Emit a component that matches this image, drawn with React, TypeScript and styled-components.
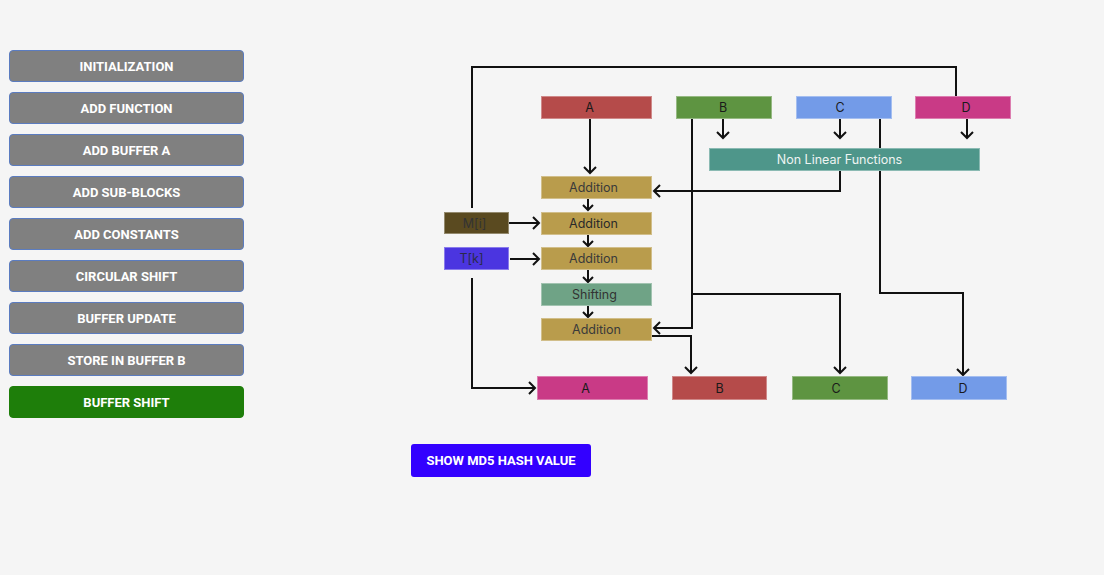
import * as React from 'react'
import styled, { createGlobalStyle } from 'styled-components'

const GlobalStyle = createGlobalStyle`
  html, body {
    margin: 0;
    padding: 0;
    background: #f5f5f5;
  }
`

const Page = styled.div`
  display: flex;
  align-items: flex-start;
  width: 1104px;
  height: 575px;
  background: #f5f5f5;
  font-family: Roboto, 'Liberation Sans', sans-serif;
`

const Sidebar = styled.div`
  display: flex;
  flex-direction: column;
  gap: 10px;
  width: 235px;
  margin: 50px 0 0 9px;
`

const StepButton = styled.button<{ $active?: boolean }>`
  height: 32px;
  border-radius: 4px;
  border: 1px solid ${(p) => (p.$active ? '#1e7e0a' : '#5b7cc0')};
  background: ${(p) => (p.$active ? '#1e7e0a' : '#808080')};
  color: #fff;
  font-family: Roboto, 'Liberation Sans', sans-serif;
  font-weight: 700;
  font-size: 13px;
  text-transform: uppercase;
  cursor: pointer;
`

const Main = styled.div`
  display: flex;
  flex-direction: column;
  align-items: flex-start;
  margin: 50px 0 0 167px;
`

const Canvas = styled.div`
  position: relative;
  width: 620px;
  height: 384px;
`

const Wires = styled.svg`
  position: absolute;
  left: 0;
  top: 0;
  width: 620px;
  height: 384px;
`

const Node = styled.div<{ $bg: string; $fg?: string }>`
  position: absolute;
  display: flex;
  align-items: center;
  justify-content: center;
  box-sizing: border-box;
  background: ${(p) => p.$bg};
  color: ${(p) => p.$fg || '#1a1a1a'};
  border: 1px solid rgba(255, 255, 255, 0.35);
  font-family: Inter, 'Noto Sans', sans-serif;
  font-size: 12.5px;
`

const Label = styled.span<{ $dx?: number }>`
  position: relative;
  left: ${(p) => p.$dx || 0}px;
`

const HashButton = styled.button`
  margin-top: 10px;
  width: 180px;
  height: 33px;
  border: none;
  border-radius: 3px;
  background: #3300ff;
  color: #fff;
  font-family: Roboto, 'Liberation Sans', sans-serif;
  font-weight: 700;
  font-size: 13px;
  text-transform: uppercase;
  cursor: pointer;
`

const steps = [
  'Initialization',
  'Add Function',
  'Add Buffer A',
  'Add Sub-Blocks',
  'Add Constants',
  'Circular Shift',
  'Buffer Update',
  'Store in Buffer B',
  'Buffer Shift',
]

type N = { label: string; x: number; y: number; w: number; h: number; bg: string; fg?: string; dx?: number }

const ox = 411
const oy = 50

const nodes: N[] = [
  { label: 'A', x: 541, y: 96, w: 111, h: 23, bg: '#b54b4a', dx: -7 },
  { label: 'B', x: 676, y: 96, w: 96, h: 23, bg: '#5e9441', dx: -1 },
  { label: 'C', x: 796, y: 96, w: 96, h: 23, bg: '#739be8', dx: -4 },
  { label: 'D', x: 915, y: 96, w: 96, h: 23, bg: '#c93a86', dx: 3 },
  { label: 'Non Linear Functions', x: 709, y: 148, w: 271, h: 23, bg: '#4e968a', fg: '#eef4f2', dx: -5 },
  { label: 'Addition', x: 541, y: 176, w: 111, h: 23, bg: '#b99c4c', fg: '#3a3a3a', dx: -3 },
  { label: 'M[i]', x: 444, y: 212, w: 65, h: 22, bg: '#5a4a20', fg: '#333', dx: -2 },
  { label: 'Addition', x: 541, y: 212, w: 111, h: 23, bg: '#b99c4c', fg: '#2a2a2a', dx: -3 },
  { label: 'T[k]', x: 444, y: 247, w: 65, h: 23, bg: '#4b35e0', fg: '#2a2a4a', dx: -5 },
  { label: 'Addition', x: 541, y: 247, w: 111, h: 23, bg: '#b99c4c', fg: '#3a3a3a', dx: -3 },
  { label: 'Shifting', x: 541, y: 283, w: 111, h: 23, bg: '#6fa386', fg: '#333', dx: -2 },
  { label: 'Addition', x: 541, y: 318, w: 111, h: 23, bg: '#b99c4c', fg: '#3a3a3a' },
  { label: 'A', x: 537, y: 376, w: 111, h: 24, bg: '#c93a86', dx: -7 },
  { label: 'B', x: 672, y: 376, w: 95, h: 24, bg: '#b54b4a' },
  { label: 'C', x: 792, y: 376, w: 96, h: 24, bg: '#5e9441', dx: -4 },
  { label: 'D', x: 911, y: 376, w: 96, h: 24, bg: '#739be8', dx: 4 },
]

const down = (x: number, y: number, s = 6) => `M${x - s} ${y - s} L${x} ${y} L${x + s} ${y - s}`
const left = (x: number, y: number, s = 6) => `M${x + s} ${y - s} L${x} ${y} L${x + s} ${y + s}`
const right = (x: number, y: number, s = 6) => `M${x - s} ${y - s} L${x} ${y} L${x - s} ${y + s}`

const wires = [
  'M472 208 V67 H956 V96',
  'M590 119 V173', down(590, 173),
  'M723 119 V138', down(723, 138),
  'M840 119 V138', down(840, 138),
  'M967 119 V138', down(967, 138),
  'M692 119 V328 H654', left(654, 328),
  'M692 294 H840 V373', down(840, 373),
  'M880 119 V293 H963 V375', down(963, 375),
  'M840 171 V191 H654', left(654, 191),
  'M588 198 V210', down(588, 210, 5),
  'M588 234 V246', down(588, 246, 5),
  'M588 270 V282', down(588, 282, 5),
  'M588 306 V317', down(588, 317, 5),
  'M509 223 H539', right(539, 223),
  'M510 259 H539', right(539, 259),
  'M472 278 V388 H535', right(535, 388),
  'M652 336 H691 V373', down(691, 373),
]

export default function App() {
  return (
    <Page>
      <GlobalStyle />
      <Sidebar>
        {steps.map((s, i) => (
          <StepButton key={s} $active={i === steps.length - 1}>
            {s}
          </StepButton>
        ))}
      </Sidebar>
      <Main>
        <Canvas>
          <Wires viewBox={`${ox} ${oy} 620 384`}>
            {wires.map((d, i) => (
              <path key={i} d={d} fill="none" stroke="#111" strokeWidth={2} />
            ))}
          </Wires>
          {nodes.map((n, i) => (
            <Node
              key={i}
              $bg={n.bg}
              $fg={n.fg}
              style={{ left: n.x - ox, top: n.y - oy, width: n.w, height: n.h }}
            >
              <Label $dx={n.dx}>{n.label}</Label>
            </Node>
          ))}
        </Canvas>
        <HashButton>Show MD5 Hash Value</HashButton>
      </Main>
    </Page>
  )
}
